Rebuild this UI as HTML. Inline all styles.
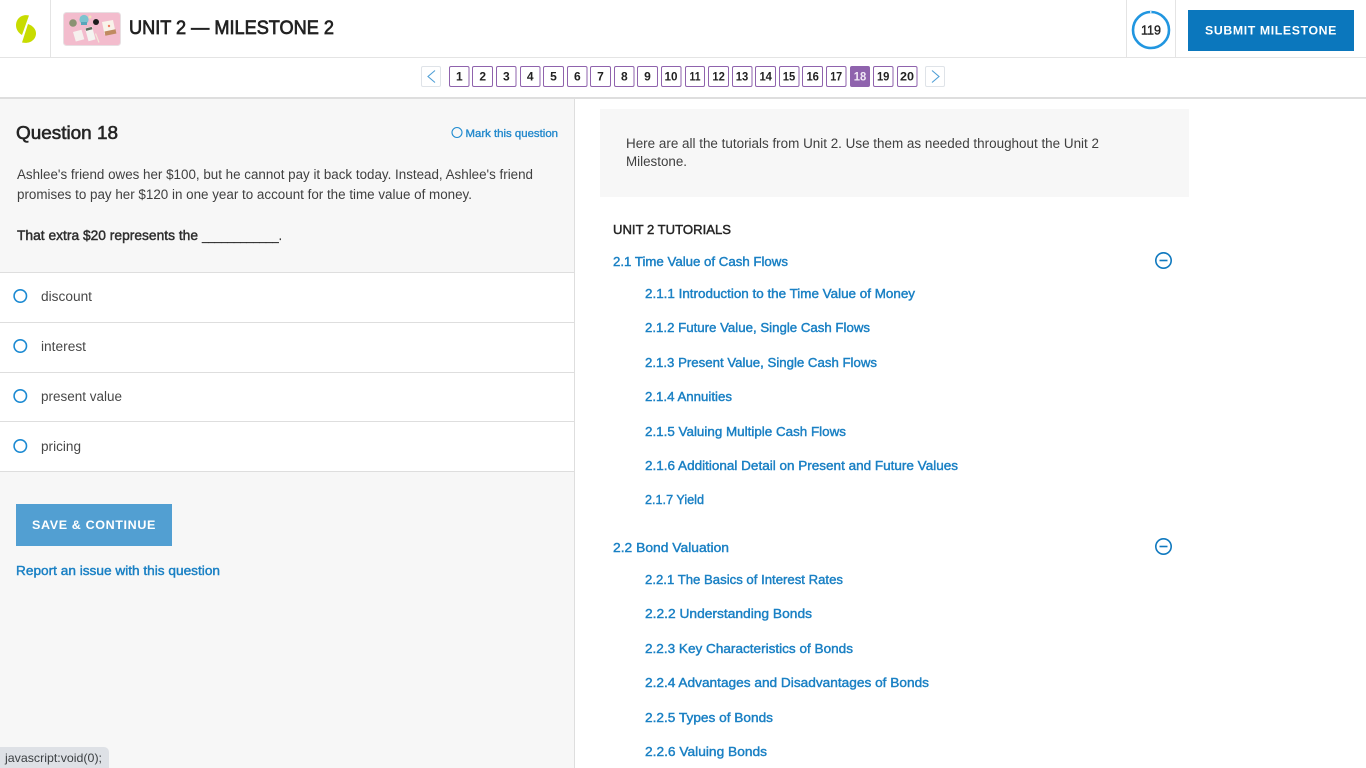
<!DOCTYPE html>
<html lang="en">
<head>
<meta charset="utf-8">
<title>Unit 2 — Milestone 2</title>
<style>
html,body{margin:0;padding:0;width:1366px;height:768px;overflow:hidden;background:#fff}
svg{position:absolute;left:0;top:0;display:block}
text{font-family:"Liberation Sans",sans-serif;font-size:13px;fill:#333;white-space:pre}
.s{stroke:currentColor;stroke-width:.25px}
.l{fill:#1a80c4;font-size:13px;stroke:#1a80c4;stroke-width:.42px}
.n{font-size:12px;font-weight:700;fill:#222;text-anchor:middle}
.o{fill:#484848;font-size:13.5px}
.b{fill:#404040;font-size:13.5px}
</style>
</head>
<body>
<svg width="1366" height="768" viewBox="0 0 1366 768">
<!-- panels -->
<rect x="0" y="99" width="574" height="669" fill="#f7f7f7"/>
<rect x="0" y="57" width="1366" height="1" fill="#e4e4e4"/>
<rect x="0" y="97" width="1366" height="2" fill="#dedede"/>
<rect x="50" y="0" width="1" height="57" fill="#e4e4e4"/>
<rect x="1126" y="0" width="1" height="57" fill="#e4e4e4"/>
<rect x="1175" y="0" width="1" height="57" fill="#e4e4e4"/>
<rect x="574" y="99" width="1" height="669" fill="#dedede"/>
<rect x="0" y="273" width="574" height="198" fill="#fff"/>
<rect x="0" y="272" width="574" height="1" fill="#dedede"/>
<rect x="0" y="322" width="574" height="1" fill="#dedede"/>
<rect x="0" y="372" width="574" height="1" fill="#dedede"/>
<rect x="0" y="421" width="574" height="1" fill="#dedede"/>
<rect x="0" y="471" width="574" height="1" fill="#dedede"/>
<rect x="600" y="109" width="589" height="88" fill="#f7f7f7"/>

<!-- logo -->
<path d="M29 15.5C21.5 13.6 16 19 16 25.2C16 29.6 18.6 33 22 35Z" fill="#c8dc00"/>
<path d="M28 24C32.8 25.6 36 29.2 36 33.4C36 39.4 30.2 44.4 22 42.5Z" fill="#c8dc00"/>

<!-- thumbnail -->
<rect x="63.5" y="12.5" width="57" height="33" rx="3" fill="#f3bccd" stroke="#e8dfe2"/>
<circle cx="73" cy="23" r="3.8" fill="#8b9273"/>
<circle cx="84" cy="19.5" r="4.6" fill="#7cc3cf"/>
<rect x="81" y="22" width="6" height="3" fill="#58a6ba"/>
<circle cx="90" cy="17" r="1.5" fill="#f2e2b8"/>
<circle cx="96" cy="22" r="3" fill="#1c1c1c"/>
<path d="M73 32l8.5-2.2 2.8 9.5-8.5 2.2z" fill="#f6f0ee"/>
<path d="M85 28.2l7-1.8 3.5 13-7 1.8z" fill="#f4f4f1"/>
<path d="M85.5 28.5l6.2-1.6.7 2.4-6.2 1.6z" fill="#5a6a5a"/>
<path d="M102 22l11-2 2.5 12-11 2.2z" fill="#f8f3ea"/>
<path d="M104.5 31.5l11-2.2 .9 4.2-11 2.2z" fill="#c08a60"/>
<path d="M95.5 33.5l3.5 9" stroke="#f3e9d9" stroke-width="1.2"/>
<circle cx="109" cy="26" r="1.2" fill="#ef7f63"/>

<text x="129" y="34" style="font-size:19px;fill:#222;color:#222;stroke-width:.7px" class="s" textLength="205" lengthAdjust="spacingAndGlyphs">UNIT 2 — MILESTONE 2</text>

<!-- timer -->
<circle cx="1151" cy="30" r="18" fill="none" stroke="#2196e0" stroke-width="2.6"/>
<rect x="1150" y="10" width="1.5" height="4" fill="#cfe7f7"/>
<text x="1141" y="34.7" style="font-size:13px;fill:#222;color:#222;stroke-width:.4px" class="s" textLength="20" lengthAdjust="spacingAndGlyphs">119</text>

<!-- submit -->
<rect x="1188" y="10" width="166" height="41" fill="#0b77bd"/>
<text x="1205" y="34.7" style="font-size:12px;font-weight:700;fill:#fff;letter-spacing:.6px" textLength="132" lengthAdjust="spacingAndGlyphs">SUBMIT MILESTONE</text>

<!-- pager -->
<rect x="421.5" y="66.5" width="19" height="20" rx="1.5" fill="#fff" stroke="#dfe3e8"/>
<path d="M435 70.5L428 76.5L435 82.5" fill="none" stroke="#4f9fd6" stroke-width="1.1"/>
<rect x="925.5" y="66.5" width="19" height="20" rx="1.5" fill="#fff" stroke="#dfe3e8"/>
<path d="M932 70.5L939 76.5L932 82.5" fill="none" stroke="#4f9fd6" stroke-width="1.1"/>
<g fill="#fff" stroke="#8f63ad" stroke-width="1">
<rect x="449.5" y="66.5" width="19.5" height="20" rx="1.5"/>
<rect x="472.5" y="66.5" width="20" height="20" rx="1.5"/>
<rect x="496.5" y="66.5" width="19.5" height="20" rx="1.5"/>
<rect x="520.5" y="66.5" width="19.5" height="20" rx="1.5"/>
<rect x="543.5" y="66.5" width="20" height="20" rx="1.5"/>
<rect x="567.5" y="66.5" width="19.5" height="20" rx="1.5"/>
<rect x="590.5" y="66.5" width="20" height="20" rx="1.5"/>
<rect x="614.5" y="66.5" width="19.5" height="20" rx="1.5"/>
<rect x="637.5" y="66.5" width="20" height="20" rx="1.5"/>
<rect x="661.5" y="66.5" width="19.5" height="20" rx="1.5"/>
<rect x="685.5" y="66.5" width="19" height="20" rx="1.5"/>
<rect x="708.5" y="66.5" width="20" height="20" rx="1.5"/>
<rect x="732.5" y="66.5" width="19.5" height="20" rx="1.5"/>
<rect x="755.5" y="66.5" width="20" height="20" rx="1.5"/>
<rect x="779.5" y="66.5" width="19.5" height="20" rx="1.5"/>
<rect x="802.5" y="66.5" width="20" height="20" rx="1.5"/>
<rect x="826.5" y="66.5" width="19.5" height="20" rx="1.5"/>
<rect x="850" y="66" width="20" height="21" rx="2" fill="#8f63ad" stroke="none"/>
<rect x="873.5" y="66.5" width="19.5" height="20" rx="1.5"/>
<rect x="897.5" y="66.5" width="19.5" height="20" rx="1.5"/>
</g>
<text class="n" x="459.3" y="80.5">1</text>
<text class="n" x="482.7" y="80.5">2</text>
<text class="n" x="506.3" y="80.5">3</text>
<text class="n" x="530.2" y="80.5">4</text>
<text class="n" x="553.5" y="80.5">5</text>
<text class="n" x="577.3" y="80.5">6</text>
<text class="n" x="600.5" y="80.5">7</text>
<text class="n" x="624.3" y="80.5">8</text>
<text class="n" x="647.5" y="80.5">9</text>
<text class="n" x="671" y="80.5" textLength="13" lengthAdjust="spacingAndGlyphs">10</text>
<text class="n" x="695" y="80.5" textLength="11" lengthAdjust="spacingAndGlyphs">11</text>
<text class="n" x="718.6" y="80.5" textLength="12.5" lengthAdjust="spacingAndGlyphs">12</text>
<text class="n" x="742" y="80.5" textLength="12.5" lengthAdjust="spacingAndGlyphs">13</text>
<text class="n" x="765.7" y="80.5" textLength="12.5" lengthAdjust="spacingAndGlyphs">14</text>
<text class="n" x="789" y="80.5" textLength="12.5" lengthAdjust="spacingAndGlyphs">15</text>
<text class="n" x="812.7" y="80.5" textLength="12.5" lengthAdjust="spacingAndGlyphs">16</text>
<text class="n" x="836.2" y="80.5" textLength="12" lengthAdjust="spacingAndGlyphs">17</text>
<text class="n" x="860" y="80.5" style="fill:#f1e9f6" textLength="12.5" lengthAdjust="spacingAndGlyphs">18</text>
<text class="n" x="883.2" y="80.5" textLength="12.5" lengthAdjust="spacingAndGlyphs">19</text>
<text class="n" x="907" y="80.5" textLength="14" lengthAdjust="spacingAndGlyphs">20</text>

<!-- question -->
<text x="16" y="139" style="font-size:18.5px;fill:#252525;color:#252525;stroke-width:.6px" class="s" textLength="102" lengthAdjust="spacingAndGlyphs">Question 18</text>
<circle cx="457" cy="132.5" r="5" fill="none" stroke="#1f8bd0" stroke-width="1.1"/>
<text x="465.5" y="137" style="font-size:11px;fill:#2389cc;stroke:#2389cc;stroke-width:.35px" textLength="92.5" lengthAdjust="spacingAndGlyphs">Mark this question</text>
<text class="b" x="17" y="179" textLength="516" lengthAdjust="spacingAndGlyphs">Ashlee's friend owes her $100, but he cannot pay it back today. Instead, Ashlee's friend</text>
<text class="b" x="17" y="199" textLength="455" lengthAdjust="spacingAndGlyphs">promises to pay her $120 in one year to account for the time value of money.</text>
<text x="17" y="240" style="font-size:13.5px;fill:#2e2e2e;stroke:#2e2e2e;stroke-width:.45px" textLength="181" lengthAdjust="spacingAndGlyphs">That extra $20 represents the</text>
<text x="202" y="240" style="font-size:13.5px;fill:#2e2e2e;stroke:#2e2e2e;stroke-width:.2px" textLength="80" lengthAdjust="spacingAndGlyphs">____________.</text>

<!-- options -->
<g fill="#fff" stroke="#1c8ad2" stroke-width="1.6">
<circle cx="20.3" cy="296" r="6.2"/>
<circle cx="20.3" cy="346" r="6.2"/>
<circle cx="20.3" cy="396" r="6.2"/>
<circle cx="20.3" cy="446" r="6.2"/>
</g>
<text class="o" x="41" y="301" textLength="51" lengthAdjust="spacingAndGlyphs">discount</text>
<text class="o" x="41" y="351" textLength="45" lengthAdjust="spacingAndGlyphs">interest</text>
<text class="o" x="41" y="401" textLength="81" lengthAdjust="spacingAndGlyphs">present value</text>
<text class="o" x="41" y="451" textLength="40" lengthAdjust="spacingAndGlyphs">pricing</text>

<!-- save -->
<rect x="16" y="504" width="156" height="42" fill="#529fd2"/>
<text x="32" y="529" style="font-size:12px;font-weight:700;fill:#fff;letter-spacing:.6px" textLength="124" lengthAdjust="spacingAndGlyphs">SAVE &amp; CONTINUE</text>
<text class="l" x="16" y="575" textLength="204" lengthAdjust="spacingAndGlyphs">Report an issue with this question</text>

<!-- info -->
<text class="b" x="626" y="148" textLength="473" lengthAdjust="spacingAndGlyphs">Here are all the tutorials from Unit 2. Use them as needed throughout the Unit 2</text>
<text class="b" x="626" y="166" textLength="61" lengthAdjust="spacingAndGlyphs">Milestone.</text>

<!-- tutorials -->
<text x="613" y="234" style="font-size:13px;fill:#252525;stroke:#252525;stroke-width:.45px" textLength="118" lengthAdjust="spacingAndGlyphs">UNIT 2 TUTORIALS</text>
<text class="l" x="613" y="266" textLength="175" lengthAdjust="spacingAndGlyphs">2.1 Time Value of Cash Flows</text>
<text class="l" x="645" y="298" textLength="270" lengthAdjust="spacingAndGlyphs">2.1.1 Introduction to the Time Value of Money</text>
<text class="l" x="645" y="332" textLength="225" lengthAdjust="spacingAndGlyphs">2.1.2 Future Value, Single Cash Flows</text>
<text class="l" x="645" y="367" textLength="232" lengthAdjust="spacingAndGlyphs">2.1.3 Present Value, Single Cash Flows</text>
<text class="l" x="645" y="401" textLength="87" lengthAdjust="spacingAndGlyphs">2.1.4 Annuities</text>
<text class="l" x="645" y="436" textLength="201" lengthAdjust="spacingAndGlyphs">2.1.5 Valuing Multiple Cash Flows</text>
<text class="l" x="645" y="470" textLength="313" lengthAdjust="spacingAndGlyphs">2.1.6 Additional Detail on Present and Future Values</text>
<text class="l" x="645" y="504" textLength="59" lengthAdjust="spacingAndGlyphs">2.1.7 Yield</text>
<text class="l" x="613" y="552" textLength="116" lengthAdjust="spacingAndGlyphs">2.2 Bond Valuation</text>
<text class="l" x="645" y="584" textLength="198" lengthAdjust="spacingAndGlyphs">2.2.1 The Basics of Interest Rates</text>
<text class="l" x="645" y="618" textLength="167" lengthAdjust="spacingAndGlyphs">2.2.2 Understanding Bonds</text>
<text class="l" x="645" y="653" textLength="208" lengthAdjust="spacingAndGlyphs">2.2.3 Key Characteristics of Bonds</text>
<text class="l" x="645" y="687" textLength="284" lengthAdjust="spacingAndGlyphs">2.2.4 Advantages and Disadvantages of Bonds</text>
<text class="l" x="645" y="722" textLength="128" lengthAdjust="spacingAndGlyphs">2.2.5 Types of Bonds</text>
<text class="l" x="645" y="756" textLength="122" lengthAdjust="spacingAndGlyphs">2.2.6 Valuing Bonds</text>

<g fill="none" stroke="#1079bf" stroke-width="1.6">
<circle cx="1163.5" cy="260.5" r="7.7"/>
<path d="M1159.5 260.5h8"/>
<circle cx="1163.5" cy="546.5" r="7.7"/>
<path d="M1159.5 546.5h8"/>
</g>

<!-- status bubble -->
<path d="M0 747H104a5 5 0 0 1 5 5V768H0z" fill="#dee1e6"/>
<text x="5" y="762" style="font-size:12px;fill:#3c4043" textLength="97" lengthAdjust="spacingAndGlyphs">javascript:void(0);</text>
</svg>
</body>
</html>
